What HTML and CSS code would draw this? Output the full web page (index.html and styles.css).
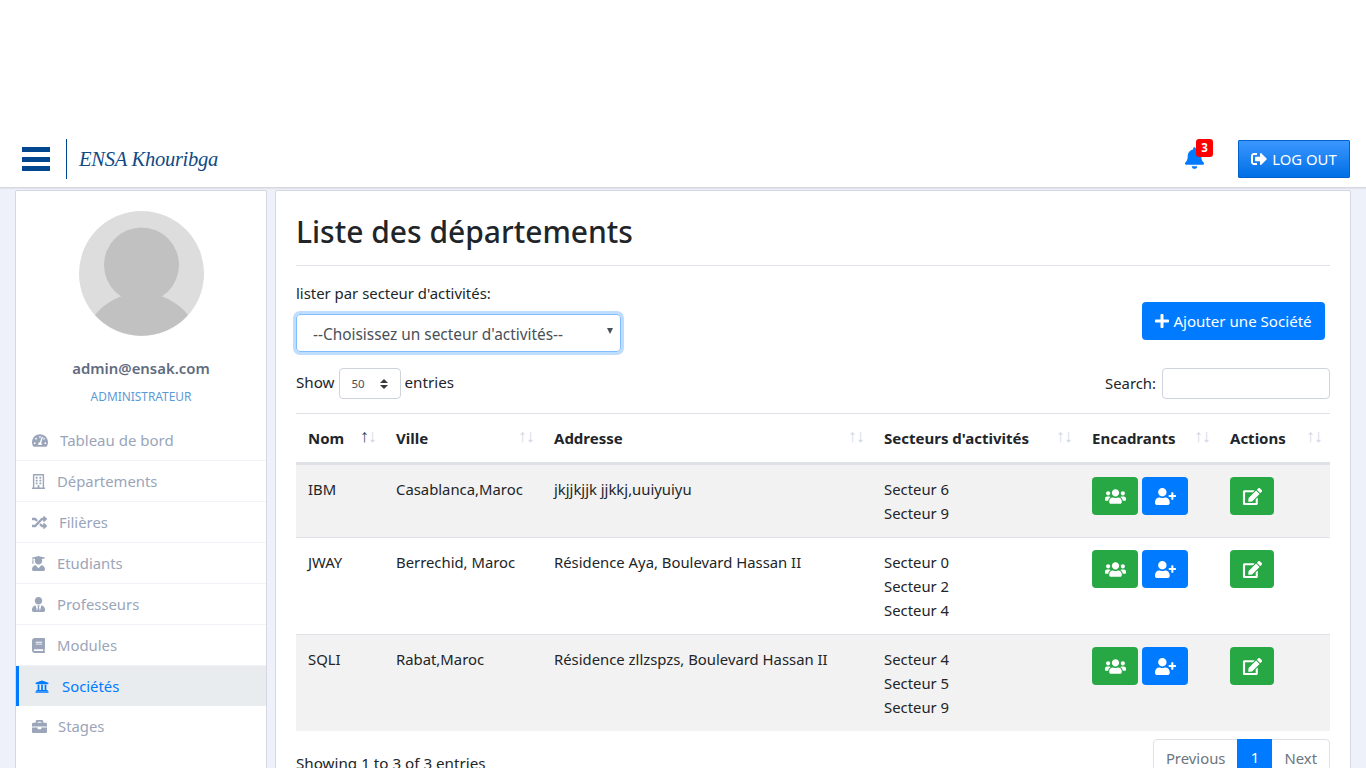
FILE: index.html
```html
<!DOCTYPE html>
<html lang="fr">
<head>
<meta charset="utf-8">
<title>Liste des départements</title>
<link rel="stylesheet" href="styles.css">
</head>
<body>
<svg class="defs" aria-hidden="true">
<symbol id="i-bell" viewBox="0 0 448 512"><path d="M224 512c35.32 0 63.97-28.65 63.97-64H160.03c0 35.35 28.65 64 63.97 64zm215.39-149.71c-19.32-20.76-55.47-51.99-55.47-154.29 0-77.7-54.48-139.9-127.94-155.16V32c0-17.67-14.32-32-31.98-32s-31.98 14.33-31.98 32v20.84C118.56 68.1 64.08 130.3 64.08 208c0 102.3-36.15 133.53-55.47 154.29-6 6.45-8.66 14.16-8.61 21.71.11 16.4 12.98 32 32.1 32h383.8c19.12 0 32-15.6 32.1-32 .05-7.55-2.61-15.27-8.61-21.71z"/></symbol>
<symbol id="i-out" viewBox="0 0 512 512"><path d="M497 273L329 441c-15 15-41 4.5-41-17v-96H152c-13.3 0-24-10.7-24-24v-96c0-13.3 10.7-24 24-24h136V88c0-21.4 25.9-32 41-17l168 168c9.3 9.4 9.3 24.6 0 34zM192 436v-40c0-6.6-5.4-12-12-12H96c-17.7 0-32-14.3-32-32V160c0-17.7 14.3-32 32-32h84c6.6 0 12-5.4 12-12V76c0-6.6-5.4-12-12-12H96c-53 0-96 43-96 96v192c0 53 43 96 96 96h84c6.6 0 12-5.4 12-12z"/></symbol>
<symbol id="i-plus" viewBox="0 0 448 512"><path d="M416 208H272V64c0-17.67-14.33-32-32-32h-32c-17.67 0-32 14.33-32 32v144H32c-17.67 0-32 14.33-32 32v32c0 17.67 14.33 32 32 32h144v144c0 17.67 14.33 32 32 32h32c17.67 0 32-14.33 32-32V304h144c17.67 0 32-14.33 32-32v-32c0-17.67-14.33-32-32-32z"/></symbol>
<symbol id="i-users" viewBox="0 0 640 512"><path d="M96 224c35.3 0 64-28.7 64-64s-28.7-64-64-64-64 28.7-64 64 28.7 64 64 64zm448 0c35.3 0 64-28.7 64-64s-28.7-64-64-64-64 28.7-64 64 28.7 64 64 64zm32 32h-64c-17.6 0-33.5 7.1-45.1 18.6 40.3 22.1 68.9 62 75.1 109.4h66c17.7 0 32-14.3 32-32v-32c0-35.3-28.7-64-64-64zm-256 0c61.9 0 112-50.1 112-112S381.9 32 320 32 208 82.1 208 144s50.1 112 112 112zm76.8 32h-8.3c-20.8 10-43.9 16-68.5 16s-47.6-6-68.5-16h-8.3C179.6 288 128 339.6 128 403.2V432c0 26.5 21.5 48 48 48h288c26.5 0 48-21.5 48-48v-28.8c0-63.6-51.6-115.2-115.2-115.2zm-223.7-13.4C161.5 263.1 145.6 256 128 256H64c-35.3 0-64 28.7-64 64v32c0 17.7 14.3 32 32 32h65.9c6.3-47.4 34.9-87.3 75.2-109.4z"/></symbol>
<symbol id="i-uplus" viewBox="0 0 640 512"><path d="M624 208h-64v-64c0-8.8-7.2-16-16-16h-32c-8.8 0-16 7.2-16 16v64h-64c-8.8 0-16 7.2-16 16v32c0 8.8 7.2 16 16 16h64v64c0 8.8 7.2 16 16 16h32c8.8 0 16-7.2 16-16v-64h64c8.8 0 16-7.2 16-16v-32c0-8.8-7.2-16-16-16zm-400 48c70.7 0 128-57.3 128-128S294.7 0 224 0 96 57.3 96 128s57.3 128 128 128zm89.6 32h-16.7c-22.2 10.2-46.9 16-72.9 16s-50.6-5.8-72.9-16h-16.7C60.2 288 0 348.2 0 422.4V464c0 26.5 21.5 48 48 48h352c26.5 0 48-21.5 48-48v-41.6c0-74.2-60.2-134.4-134.4-134.4z"/></symbol>
<symbol id="i-edit" viewBox="0 0 576 512"><path d="M402.6 83.2l90.2 90.2c3.8 3.8 3.8 10 0 13.8L274.4 405.6l-92.8 10.3c-12.4 1.4-22.9-9.1-21.5-21.5l10.3-92.8L388.8 83.2c3.8-3.8 10-3.8 13.8 0zm162-22.9l-48.8-48.8c-15.2-15.2-39.9-15.2-55.2 0l-35.4 35.4c-3.8 3.8-3.8 10 0 13.8l90.2 90.2c3.8 3.8 10 3.8 13.8 0l35.4-35.4c15.2-15.3 15.2-40 0-55.2zM384 346.2V448H64V128h229.8c3.2 0 6.2-1.3 8.5-3.5l40-40c7.6-7.6 2.2-20.5-8.5-20.5H48C21.5 64 0 85.5 0 112v352c0 26.5 21.5 48 48 48h352c26.5 0 48-21.5 48-48V306.2c0-10.7-12.9-16-20.5-8.5l-40 40c-2.2 2.3-3.5 5.3-3.5 8.5z"/></symbol>
<symbol id="i-gauge" viewBox="0 0 576 512"><path d="M288 32C128.94 32 0 160.94 0 320c0 52.8 14.25 102.26 39.06 144.8 5.61 9.62 16.3 15.2 27.44 15.2h443c11.14 0 21.83-5.58 27.44-15.2C561.75 422.26 576 372.8 576 320c0-159.06-128.94-288-288-288zm0 64c14.71 0 26.58 10.13 30.32 23.65-1.11 2.26-2.64 4.23-3.45 6.67l-9.22 27.67c-5.13 3.49-10.97 6.01-17.64 6.01-17.67 0-32-14.33-32-32S270.33 96 288 96zM96 384c-17.67 0-32-14.33-32-32s14.33-32 32-32 32 14.33 32 32-14.33 32-32 32zm48-160c-17.67 0-32-14.33-32-32s14.33-32 32-32 32 14.33 32 32-14.33 32-32 32zm246.77-72.41l-61.33 184C343.13 347.33 352 364.54 352 384c0 11.72-3.38 22.55-8.88 32H232.88c-5.5-9.45-8.88-20.28-8.88-32 0-33.94 26.5-61.43 59.9-63.59l61.34-184.01c4.17-12.56 17.73-19.45 30.36-15.17 12.57 4.19 19.35 17.79 15.17 30.36zm14.66 57.2l15.52-46.55c3.47-1.29 7.13-2.23 11.05-2.23 17.67 0 32 14.33 32 32s-14.33 32-32 32c-11.38-.01-20.89-6.28-26.57-15.22zM480 384c-17.67 0-32-14.33-32-32s14.33-32 32-32 32 14.33 32 32-14.33 32-32 32z"/></symbol>
<symbol id="i-building" viewBox="0 0 448 512"><path d="M128 148v-40c0-6.6 5.4-12 12-12h40c6.6 0 12 5.4 12 12v40c0 6.6-5.4 12-12 12h-40c-6.6 0-12-5.4-12-12zm140 12h40c6.6 0 12-5.4 12-12v-40c0-6.6-5.4-12-12-12h-40c-6.6 0-12 5.4-12 12v40c0 6.6 5.4 12 12 12zm-128 96h40c6.6 0 12-5.4 12-12v-40c0-6.6-5.4-12-12-12h-40c-6.6 0-12 5.4-12 12v40c0 6.6 5.4 12 12 12zm128 0h40c6.6 0 12-5.4 12-12v-40c0-6.6-5.4-12-12-12h-40c-6.6 0-12 5.4-12 12v40c0 6.6 5.4 12 12 12zm-76 84v-40c0-6.6-5.4-12-12-12h-40c-6.6 0-12 5.4-12 12v40c0 6.6 5.4 12 12 12h40c6.6 0 12-5.4 12-12zm76 12h40c6.6 0 12-5.4 12-12v-40c0-6.6-5.4-12-12-12h-40c-6.6 0-12 5.4-12 12v40c0 6.6 5.4 12 12 12zm180 124v36H0v-36c0-6.6 5.4-12 12-12h19.5V24c0-13.3 10.7-24 24-24h337c13.3 0 24 10.7 24 24v440H436c6.6 0 12 5.4 12 12zM79.5 463H192v-67c0-6.6 5.4-12 12-12h40c6.6 0 12 5.4 12 12v67h112.5V49L80 48l-.5 415z"/></symbol>
<symbol id="i-random" viewBox="0 0 512 512"><path d="M504.971 359.029c9.373 9.373 9.373 24.569 0 33.941l-80 79.984c-15.01 15.01-40.971 4.49-40.971-16.971V416h-58.785a12.004 12.004 0 0 1-8.773-3.812l-70.556-75.596 53.333-57.143L352 336h32v-39.981c0-21.438 25.943-31.998 40.971-16.971l80 79.981zM12 176h84l52.781 56.551 53.333-57.143-70.556-75.596A11.999 11.999 0 0 0 122.785 96H12c-6.627 0-12 5.373-12 12v56c0 6.627 5.373 12 12 12zm372 0v39.984c0 21.46 25.961 31.98 40.971 16.971l80-79.984c9.373-9.373 9.373-24.569 0-33.941l-80-79.981C409.943 24.021 384 34.582 384 56.019V96h-58.785a12.004 12.004 0 0 0-8.773 3.812L96 336H12c-6.627 0-12 5.373-12 12v56c0 6.627 5.373 12 12 12h110.785c3.326 0 6.503-1.381 8.773-3.812L352 176h32z"/></symbol>
<symbol id="i-grad" viewBox="0 0 448 512"><path d="M319.4 320.6L224 416l-95.4-95.4C57.1 323.7 0 382.2 0 454.4v9.6c0 26.5 21.5 48 48 48h352c26.5 0 48-21.5 48-48v-9.6c0-72.2-57.1-130.7-128.6-133.8zM13.6 79.8l6.4 1.5v58.4c-7 4.2-12 11.5-12 20.3 0 8.4 4.6 15.4 11.1 19.7L3.5 242c-1.7 6.9 2.1 14 7.6 14h41.8c5.5 0 9.3-7.1 7.6-14l-15.6-62.3C51.4 175.4 56 168.4 56 160c0-8.8-5-16.1-12-20.3V87.1l66 15.9c-8.6 17.2-14 36.4-14 57 0 70.7 57.3 128 128 128s128-57.3 128-128c0-20.6-5.3-39.8-14-57l96.3-23.2c18.2-4.4 18.2-27.1 0-31.5l-190.4-46c-13-3.1-26.7-3.1-39.7 0L13.6 48.2c-18.1 4.4-18.1 27.2 0 31.6z"/></symbol>
<symbol id="i-tie" viewBox="0 0 448 512"><path d="M224 256c70.7 0 128-57.3 128-128S294.7 0 224 0 96 57.3 96 128s57.3 128 128 128zm95.8 32.6L272 480l-32-136 32-56h-96l32 56-32 136-47.8-191.4C56.9 292 0 350.3 0 422.4V464c0 26.5 21.5 48 48 48h352c26.5 0 48-21.5 48-48v-41.6c0-72.1-56.9-130.4-128.2-133.8z"/></symbol>
<symbol id="i-book" viewBox="0 0 448 512"><path d="M448 360V24c0-13.3-10.7-24-24-24H96C43 0 0 43 0 96v320c0 53 43 96 96 96h328c13.3 0 24-10.7 24-24v-16c0-7.5-3.5-14.3-8.9-18.7-4.2-15.4-4.2-59.3 0-74.7 5.4-4.3 8.9-11.1 8.9-18.6zM128 134c0-3.3 2.7-6 6-6h212c3.3 0 6 2.7 6 6v20c0 3.3-2.7 6-6 6H134c-3.3 0-6-2.7-6-6v-20zm0 64c0-3.3 2.7-6 6-6h212c3.3 0 6 2.7 6 6v20c0 3.3-2.7 6-6 6H134c-3.3 0-6-2.7-6-6v-20zm253.4 250H96c-17.7 0-32-14.3-32-32 0-17.6 14.4-32 32-32h285.4c-1.9 17.1-1.9 46.9 0 64z"/></symbol>
<symbol id="i-bank" viewBox="0 0 512 512"><path d="M496 128v16a8 8 0 0 1-8 8h-24v12c0 6.627-5.373 12-12 12H60c-6.627 0-12-5.373-12-12v-12H24a8 8 0 0 1-8-8v-16a8 8 0 0 1 4.941-7.392l232-88a7.996 7.996 0 0 1 6.118 0l232 88A8 8 0 0 1 496 128zm-24 304H40c-13.255 0-24 10.745-24 24v16a8 8 0 0 0 8 8h464a8 8 0 0 0 8-8v-16c0-13.255-10.745-24-24-24zM96 192v192H60c-6.627 0-12 5.373-12 12v20h416v-20c0-6.627-5.373-12-12-12h-36V192h-64v192h-64V192h-64v192h-64V192H96z"/></symbol>
<symbol id="i-case" viewBox="0 0 512 512"><path d="M320 336c0 8.84-7.16 16-16 16h-96c-8.84 0-16-7.16-16-16v-48H0v144c0 25.6 22.4 48 48 48h416c25.6 0 48-22.4 48-48V288H320v48zm144-208h-80V80c0-25.6-22.4-48-48-48H176c-25.6 0-48 22.4-48 48v48H48c-25.6 0-48 22.4-48 48v80h512v-80c0-25.6-22.4-48-48-48zm-144 0H192V96h128v32z"/></symbol>
</svg>

<header class="topbar">
  <div class="brand-group">
    <button class="burger" aria-label="Menu"><span></span><span></span><span></span></button>
    <span class="brand">ENSA Khouribga</span>
  </div>
  <div class="top-actions">
    <a class="bell"><svg class="ic-bell"><use href="#i-bell"/></svg><span class="badge">3</span></a>
    <a class="logout"><svg class="ic-out"><use href="#i-out"/></svg>LOG OUT</a>
  </div>
</header>

<div class="shell">
  <aside class="sidebar card">
    <div class="profile">
      <svg class="avatar" viewBox="0 0 125 125"><circle cx="62.5" cy="62.5" r="62.5" fill="#dddddd"/><circle cx="62.5" cy="54" r="37.5" fill="#c1c1c1"/><path d="M16 104c11-14 28-22 46.500-22s35.500 8 46.500 22a62.500 62.500 0 0 1-93 0z" fill="#c1c1c1"/></svg>
      <div class="email">admin@ensak.com</div>
      <div class="role">ADMINISTRATEUR</div>
    </div>
    <nav class="menu">
      <a class="item item-wide"><svg class="mi mi-gauge"><use href="#i-gauge"/></svg><span>Tableau de bord</span></a>
      <a class="item"><svg class="mi mi-b"><use href="#i-building"/></svg><span>Départements</span></a>
      <a class="item"><svg class="mi mi-r"><use href="#i-random"/></svg><span>Filières</span></a>
      <a class="item"><svg class="mi mi-b"><use href="#i-grad"/></svg><span>Etudiants</span></a>
      <a class="item"><svg class="mi mi-b"><use href="#i-tie"/></svg><span>Professeurs</span></a>
      <a class="item"><svg class="mi mi-b"><use href="#i-book"/></svg><span>Modules</span></a>
      <a class="item active"><svg class="mi mi-bank"><use href="#i-bank"/></svg><span>Sociétés</span></a>
      <a class="item last"><svg class="mi mi-c"><use href="#i-case"/></svg><span>Stages</span></a>
    </nav>
  </aside>

  <main class="content card">
    <h1 class="title">Liste des départements</h1>
    <div class="filters">
      <div class="filter-field">
        <label class="filter-label">lister par secteur d'activités:</label>
        <div class="sector-select"><span>--Choisissez un secteur d'activités--</span><i class="caret"></i></div>
      </div>
      <a class="btn-add"><svg class="ic-plus"><use href="#i-plus"/></svg>Ajouter une Société</a>
    </div>
    <div class="dt-top">
      <div class="dt-len">Show <span class="len-select"><span>50</span><span class="updown"></span></span> entries</div>
      <div class="dt-search">Search: <span class="search-box"></span></div>
    </div>
    <table class="grid">
      <thead>
        <tr>
          <th class="c1 sorted">Nom</th><th class="c2">Ville</th><th class="c3">Addresse</th><th class="c4">Secteurs d'activités</th><th class="c5">Encadrants</th><th class="c6">Actions</th>
        </tr>
      </thead>
      <tbody>
        <tr class="odd">
          <td>IBM</td><td>Casablanca,Maroc</td><td>jkjjkjjk jjkkj,uuiyuiyu</td>
          <td>Secteur 6<br>Secteur 9</td>
          <td><div class="btns"><a class="tb green"><svg class="ic-t"><use href="#i-users"/></svg></a><a class="tb blue"><svg class="ic-t"><use href="#i-uplus"/></svg></a></div></td>
          <td><a class="tb green narrow"><svg class="ic-t"><use href="#i-edit"/></svg></a></td>
        </tr>
        <tr>
          <td>JWAY</td><td>Berrechid, Maroc</td><td>Résidence Aya, Boulevard Hassan II</td>
          <td>Secteur 0<br>Secteur 2<br>Secteur 4</td>
          <td><div class="btns"><a class="tb green"><svg class="ic-t"><use href="#i-users"/></svg></a><a class="tb blue"><svg class="ic-t"><use href="#i-uplus"/></svg></a></div></td>
          <td><a class="tb green narrow"><svg class="ic-t"><use href="#i-edit"/></svg></a></td>
        </tr>
        <tr class="odd">
          <td>SQLI</td><td>Rabat,Maroc</td><td>Résidence zllzspzs, Boulevard Hassan II</td>
          <td>Secteur 4<br>Secteur 5<br>Secteur 9</td>
          <td><div class="btns"><a class="tb green"><svg class="ic-t"><use href="#i-users"/></svg></a><a class="tb blue"><svg class="ic-t"><use href="#i-uplus"/></svg></a></div></td>
          <td><a class="tb green narrow"><svg class="ic-t"><use href="#i-edit"/></svg></a></td>
        </tr>
      </tbody>
    </table>
    <div class="dt-bottom">
      <div class="dt-info">Showing 1 to 3 of 3 entries</div>
      <div class="pager"><a class="pg prev">Previous</a><a class="pg cur">1</a><a class="pg next">Next</a></div>
    </div>
  </main>
</div>
</body>
</html>
```
FILE: styles.css
```css
* { box-sizing: border-box; }
html { overflow: hidden; height: 768px; }
body {
  margin: 0;
  background: #eef1f9;
  font-family: "Noto Sans", "Open Sans", sans-serif;
  font-size: 14.85px;
  line-height: 24px;
  color: #212529;
}
.defs { display: none; }
svg { fill: currentColor; display: block; flex: none; }

.topbar {
  height: 188px;
  padding: 139px 16px 9px 22px;
  background: #fff;
  border-bottom: 1px solid #d8d9df;
  box-shadow: 0 1px 1px rgba(0,0,0,.05);
  display: flex;
  justify-content: space-between;
}
.brand-group { display: flex; align-items: center; height: 40px; }
.burger {
  width: 28px; height: 24px; padding: 0; border: 0; background: none;
  display: flex; flex-direction: column; justify-content: space-between;
}
.burger span { display: block; height: 5px; background: #00478f; }
.brand {
  margin-left: 16px; padding-left: 12px; height: 40px;
  border-left: 1px solid #00478f;
  font: italic 20.5px/40px "Liberation Serif", serif;
  letter-spacing: -.25px;
  color: #0f4a85;
}
.top-actions { display: flex; align-items: flex-start; }
.bell { position: relative; margin-top: 8px; margin-right: 34px; color: #007bff; }
.ic-bell { width: 19px; height: 22px; }
.badge {
  position: absolute; left: 11px; top: -8px;
  width: 17px; height: 18px; border-radius: 3px;
  background: #ff0000; color: #fff;
  font: 700 11.5px/18px "Noto Sans", sans-serif; text-align: center;
}
.logout {
  display: flex; align-items: center; justify-content: center;
  margin-top: 1px;
  width: 112px; height: 38px;
  border: 1px solid #0062cc; border-radius: 1px;
  background: linear-gradient(#3b97ff, #006fe6);
  color: #fff;
}
.ic-out { width: 16px; height: 16px; margin-right: 5px; }

.shell { display: flex; gap: 8px; padding: 2px 15px 0; align-items: flex-start; }
.card { background: #fff; border: 1px solid #d5d8e0; border-radius: 2px; }

.sidebar { width: 252px; flex: none; height: 620px; }
.profile { display: flex; flex-direction: column; align-items: center; padding-top: 20px; }
.avatar { width: 125px; height: 125px; }
.email { margin-top: 20px; font-weight: 600; font-size: 14.9px; color: #5f6b7f; }
.role { margin-top: 4px; font-size: 11.9px; color: #5c9ad6; }
.menu { margin-top: 12px; display: flex; flex-direction: column; }
.item {
  height: 41px; padding-left: 16px;
  display: flex; align-items: center;
  border-bottom: 1px solid #f0f3f7;
  color: #9aa5ba;
}
.item-wide { font-size: 15px; }
.item.active {
  height: 40px; padding-left: 16px;
  background: #e9ecef; color: #007bff;
  border-left: 3px solid #007bff; border-bottom: 0;
}
.item.last { height: 40px; border-bottom: 0; }
.mi { height: 15px; }
.mi-gauge { width: 16px; margin-right: 12px; }
.mi-b { width: 13px; margin-right: 12px; }
.mi-r { width: 15px; margin-right: 12px; }
.mi-c { width: 15px; margin-right: 11px; }
.mi-bank { width: 14px; margin-right: 13px; }

.content { flex: 1; padding: 0 20px; min-width: 0; }
.title {
  margin: 0; padding: 20px 0 13px;
  font-size: 30px; line-height: 41px; font-weight: 500;
  border-bottom: 1px solid #dfe2e6;
}
.filters { display: flex; justify-content: space-between; align-items: flex-start; }
.filter-field { padding-top: 15px; }
.filter-label { display: block; height: 24px; font-size: 14.9px; }
.sector-select {
  margin-top: 9px;
  width: 325px; height: 38px; padding: 3px 16px 0;
  border: 1px solid #80bdff; border-radius: 4px;
  box-shadow: 0 0 0 3px rgba(0,123,255,.25);
  display: flex; align-items: center; justify-content: space-between;
  font-size: 15.4px;
  color: #495057;
}
.caret { width: 0; height: 0; border: 3.5px solid transparent; border-top: 6px solid #495057; border-bottom: 0; margin-right: -9px; margin-top: -7px; }
.btn-add {
  margin-top: 36px; margin-right: 5px;
  width: 183px; height: 38px; border-radius: 4px;
  background: #007bff; color: #fff;
  display: flex; align-items: center; justify-content: center;
  font-size: 15.1px;
}
.ic-plus { width: 14px; height: 16px; margin-right: 4px; }

.dt-top { display: flex; justify-content: space-between; margin-top: 16px; height: 45px; }
.dt-len { display: flex; align-items: flex-start; gap: 4px; height: 31px; line-height: 28px; font-size: 15.2px; }
.len-select {
  width: 62px; height: 31px; padding: 0 12px;
  border: 1px solid #ced4da; border-radius: 4px;
  display: flex; align-items: center; justify-content: space-between;
  font-size: 11.5px; line-height: 31px; color: #495057;
}
.updown { width: 8px; height: 10px; position: relative; }
.updown::before, .updown::after { content: ""; position: absolute; left: 0; border: 4px solid transparent; }
.updown::before { top: 0; border-bottom: 4.5px solid #343a40; border-top: 0; }
.updown::after { bottom: 0; border-top: 4.5px solid #343a40; border-bottom: 0; }
.dt-search { display: flex; gap: 6px; line-height: 30px; }
.search-box { width: 168px; height: 31px; border: 1px solid #ced4da; border-radius: 4px; background: #fff; }

.grid { width: 1034px; table-layout: fixed; border-collapse: collapse; border-top: 1px solid #dee2e6; }
.c1 { width: 88px; } .c2 { width: 158px; } .c3 { width: 330px; }
.c4 { width: 208px; } .c5 { width: 138px; } .c6 { width: 112px; }
th {
  position: relative; height: 50px; padding: 0 12px;
  text-align: left; font-weight: 700; font-size: 15px; color: #212529;
  border-bottom: 3px solid #dee2e6;
}
th::before, th::after {
  position: absolute; top: 10px; color: #cfd9e5;
  font: 400 18px/24px "Liberation Sans", sans-serif;
}
th::before { content: "\2191"; right: 15px; }
th::after { content: "\2193"; right: 7px; }
.sorted::before { color: #2f4257; }
td { padding: 12px; vertical-align: top; border-bottom: 1px solid #dee2e6; }
tbody tr:last-child td { border-bottom: 0; }
.odd { background: #f2f2f2; }
.btns { display: flex; gap: 4px; }
.tb {
  display: flex; align-items: center; justify-content: center;
  width: 46px; height: 38px; border-radius: 4px; color: #fff;
}
.tb.narrow { width: 44px; }
.green { background: #28a745; }
.blue { background: #007bff; }
.ic-t { width: 21px; height: 17px; }

.dt-bottom { display: flex; justify-content: space-between; padding-top: 8px; }
.dt-info { padding-top: 12px; font-size: 15.2px; }
.pager { display: flex; border: 1px solid #dee2e6; border-radius: 4px; height: 38px; }
.pg { padding: 0 12px; line-height: 37px; color: #6c757d; }
.cur { background: #007bff; color: #fff; width: 35px; padding: 0; text-align: center; margin-top: -1px; }
```
